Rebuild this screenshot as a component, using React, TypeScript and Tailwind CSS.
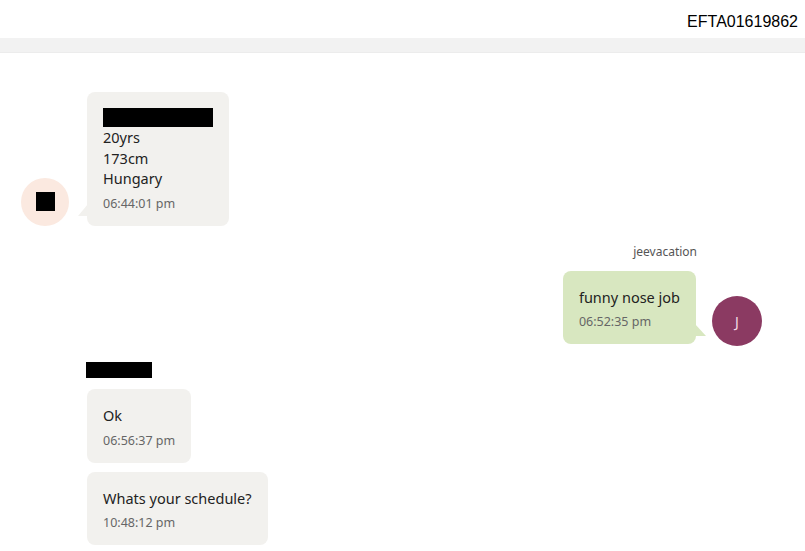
import React from "react";

const font = { fontFamily: '"Noto Sans", "Open Sans", sans-serif' };

function Tail({ side, color }: { side: "left" | "right"; color: string }) {
  // little speech tail at the bubble's lower corner
  return side === "left" ? (
    <svg width="10" height="12" viewBox="0 0 10 12" className="absolute -left-[9px] bottom-[10px]">
      <path d="M10 0 L10 12 L0 12 Z" fill={color} />
    </svg>
  ) : (
    <svg width="11" height="12" viewBox="0 0 11 12" className="absolute -right-[10px] bottom-[8px]">
      <path d="M0 0 L0 12 L11 12 Z" fill={color} />
    </svg>
  );
}

function Bubble({
  children,
  time,
  tone = "gray",
  tail,
}: {
  children: React.ReactNode;
  time: string;
  tone?: "gray" | "green";
  tail?: "left" | "right";
}) {
  const bg = tone === "green" ? "#d8e7c0" : "#f2f1ee";
  return (
    <div
      className={`relative rounded-[8px] px-4 pt-[16px] pb-[13px] ${
        tone === "green" ? "bg-[#d8e7c0]" : "bg-[#f2f1ee]"
      }`}
    >
      <div className="text-[14.5px] leading-[20.5px] text-[#222]">{children}</div>
      <div className="mt-[6px] text-[12.5px] leading-[18px] text-[#666]">{time}</div>
      {tail && <Tail side={tail} color={bg} />}
    </div>
  );
}

export default function App() {
  return (
    <div className="w-[805px] h-[551px] overflow-hidden bg-white" style={font}>
      <div className="h-[38px] flex items-center justify-end pr-[7px] pt-[6px]">
        <span
          className="text-[16px] text-black"
          style={{ fontFamily: '"Liberation Sans", Arial, sans-serif' }}
        >
          EFTA01619862
        </span>
      </div>
      <div className="h-[15px] bg-[#f2f2f2] border-b border-[#ececec]" />

      <div className="flex flex-col pt-[39px]">
        {/* incoming profile message */}
        <div className="flex items-end pl-[21px]">
          <div className="w-[48px] h-[48px] rounded-full bg-[#fbe9e0] flex items-center justify-center">
            <div className="w-[19px] h-[19px] bg-black" />
          </div>
          <div className="ml-[18px]">
            <Bubble time="06:44:01 pm" tail="left">
              <div className="w-[110px] h-[19px] bg-black" />
              <div>20yrs</div>
              <div>173cm</div>
              <div>Hungary</div>
            </Bubble>
          </div>
        </div>

        {/* outgoing */}
        <div className="flex flex-col items-end pr-[43px] mt-[18px]">
          <div className="mr-[65px] text-[12px] leading-[16px] text-[#555]">jeevacation</div>
          <div className="flex items-end mt-[11px]">
            <Bubble time="06:52:35 pm" tone="green" tail="right">
              funny nose job
            </Bubble>
            <div className="ml-[16px] mb-[-2px] w-[50px] h-[50px] rounded-full bg-[#8b3a62] flex items-center justify-center text-[14px] text-[#f3dbe6]">
              J
            </div>
          </div>
        </div>

        {/* incoming group */}
        <div className="flex flex-col items-start pl-[86px] mt-[18px] gap-[9px]">
          <div className="w-[66px] h-[16px] bg-black mb-[2px]" />
          <div className="ml-[1px]">
            <Bubble time="06:56:37 pm">Ok</Bubble>
          </div>
          <div className="ml-[1px]">
            <Bubble time="10:48:12 pm">Whats your schedule?</Bubble>
          </div>
        </div>
      </div>
    </div>
  );
}
